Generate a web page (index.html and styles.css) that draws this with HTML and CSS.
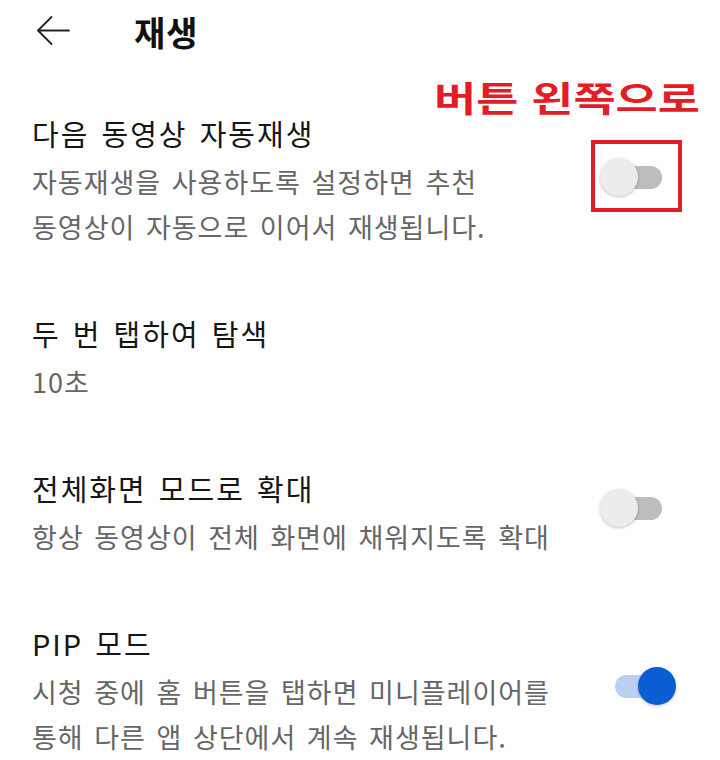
FILE: index.html
```html
<!DOCTYPE html>
<html lang="ko">
<head>
    <meta charset="UTF-8">
    <title>재생</title>
    <link rel="stylesheet" href="styles.css">
</head>
<body>
    <div class="screen">
        <div class="app-bar">
            <button class="back-button" type="button" aria-label="뒤로">
                <svg width="34" height="30" viewBox="0 0 34 30">
                    <path d="M33 14.5H2M15.5 1L2 14.5L15.5 28" fill="none" stroke="#222" stroke-width="1.8" stroke-linecap="round" stroke-linejoin="round"/>
                </svg>
            </button>
            <div class="app-title">재생</div>
        </div>

        <!-- note drawn over the settings -->
        <div class="note">버튼 왼쪽으로</div>

        <div class="settings-list">
            <div class="setting-item">
                <div class="setting-text">
                    <p class="setting-title">다음 동영상 자동재생</p>
                    <p class="setting-desc">자동재생을 사용하도록 설정하면 추천<br>동영상이 자동으로 이어서 재생됩니다.</p>
                </div>
                <div class="mark-box">
                    <div class="toggle">
                        <span class="track"></span>
                        <span class="thumb"></span>
                    </div>
                </div>
            </div>

            <div class="setting-item">
                <div class="setting-text">
                    <p class="setting-title">두 번 탭하여 탐색</p>
                    <p class="setting-desc">10초</p>
                </div>
            </div>

            <div class="setting-item">
                <div class="setting-text">
                    <p class="setting-title">전체화면 모드로 확대</p>
                    <p class="setting-desc">항상 동영상이 전체 화면에 채워지도록 확대</p>
                </div>
                <div class="toggle">
                    <span class="track"></span>
                    <span class="thumb"></span>
                </div>
            </div>

            <div class="setting-item">
                <div class="setting-text">
                    <p class="setting-title">PIP 모드</p>
                    <p class="setting-desc">시청 중에 홈 버튼을 탭하면 미니플레이어를<br>통해 다른 앱 상단에서 계속 재생됩니다.</p>
                </div>
                <div class="toggle on">
                    <span class="track"></span>
                    <span class="thumb"></span>
                </div>
            </div>
        </div>
    </div>
</body>
</html>
```

FILE: styles.css
```css
body {
    margin: 0;
    padding: 0;
    background-color: #fff;
    font-family: 'Noto Sans CJK KR', 'Noto Sans', sans-serif;
    color: #1b1b1b;
}
.screen {
    position: relative;
    width: 720px;
    height: 760px;
    overflow: hidden;
}
.app-bar {
    display: flex;
    align-items: center;
    height: 62px;
    padding-left: 36px;
    gap: 64px;
}
.back-button {
    display: flex;
    padding: 0;
    border: none;
    background: none;
}
.app-title {
    font-size: 34px;
    font-weight: bold;
    letter-spacing: 1px;
    color: #111;
}
.note {
    position: absolute;
    left: 434px;
    top: 71px;
    font-size: 35px;
    font-weight: bold;
    color: #e21d25;
    white-space: nowrap;
    transform: scaleX(1.31);
    transform-origin: left center;
}
.settings-list {
    margin-top: 48px;
}
.setting-item {
    display: flex;
    align-items: center;
    justify-content: space-between;
    padding: 0 44px 61px 32px;
}
.setting-title {
    margin: 0;
    font-size: 29px;
    line-height: 46px;
    letter-spacing: 2px;
    word-spacing: 2px;
    color: #161616;
}
.setting-desc {
    margin: 3px 0 0;
    font-size: 27px;
    line-height: 45px;
    letter-spacing: 1px;
    word-spacing: 2px;
    color: #666;
}
.toggle {
    position: relative;
    width: 76px;
    height: 38px;
    margin-bottom: 8px;
}
.toggle .track {
    position: absolute;
    top: 8px;
    left: 6px;
    right: 14px;
    height: 23px;
    border-radius: 12px;
    background-color: #bdbdbd;
}
.toggle .thumb {
    position: absolute;
    top: 0;
    left: 0;
    width: 38px;
    height: 38px;
    border-radius: 50%;
    background-color: #ececec;
    box-shadow: 0 1px 3px rgba(0, 0, 0, 0.25);
}
.toggle.on .track {
    left: 15px;
    background-color: #bad0f3;
}
.toggle.on .thumb {
    left: auto;
    right: 0;
    background-color: #0a5dd2;
}
.mark-box {
    display: flex;
    padding: 14px 2px 12px 5px;
    margin-right: -6px;
    margin-bottom: 8px;
    border: 4px solid #e21d25;
}
.mark-box .toggle {
    margin-bottom: 0;
}
```
